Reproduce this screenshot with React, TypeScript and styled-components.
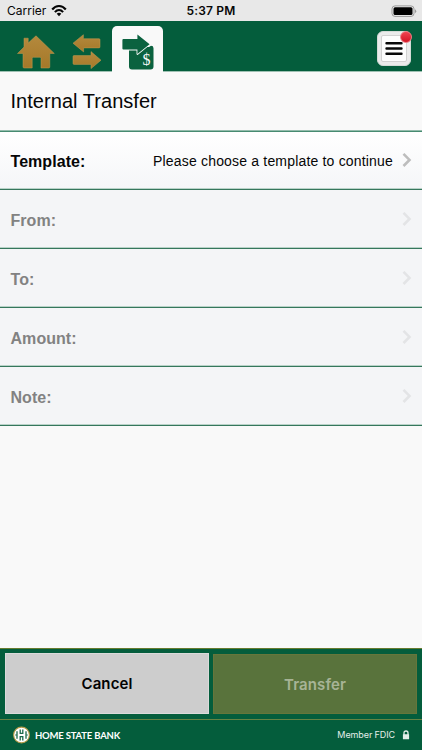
import React from "react";
import styled, { createGlobalStyle } from "styled-components";

const GlobalStyle = createGlobalStyle`
  * { box-sizing: border-box; }
  body { margin: 0; background: #f9f9f9; }
`;

const Screen = styled.div`
  width: 100%;
  height: 100vh;
  min-height: 750px;
  display: flex;
  flex-direction: column;
  overflow: hidden;
  background: #f9f9f9;
  color: #060606;
  font-family: "Liberation Sans", Arial, sans-serif;
`;

const StatusBar = styled.div`
  height: 21px;
  flex: none;
  display: grid;
  grid-template-columns: 1fr auto 1fr;
  align-items: center;
  padding: 0 5px 0 7px;
  background: #e8e8e8;
  font-family: Inter, sans-serif;
  font-size: 12px;
`;

const Carrier = styled.div`
  display: flex;
  align-items: center;
  gap: 5px;
`;

const Clock = styled.div`
  margin-left: -2px;
  font-weight: 600;
  letter-spacing: 0.2px;
`;

const BatterySlot = styled.div`
  display: flex;
  justify-content: flex-end;
`;

const Header = styled.header`
  height: 51px;
  flex: none;
  display: flex;
  background: #045d3c;
  border-bottom: 1px solid #9fc1b3;
`;

const NavButton = styled.button<{ $width: number; $active?: boolean }>`
  width: ${(p) => p.$width}px;
  height: ${(p) => (p.$active ? 46 : 50)}px;
  margin-top: ${(p) => (p.$active ? 5 : 0)}px;
  padding: 0;
  border: 0;
  border-radius: 5px 5px 0 0;
  background: ${(p) => (p.$active ? "#f9f9f9" : "transparent")};
  display: block;
  svg { display: block; }
`;

const MenuButton = styled.button`
  position: relative;
  width: 34px;
  height: 35px;
  margin: 10px 11px 0 auto;
  padding: 3px;
  border: 1px solid #d5dbd7;
  border-radius: 6px;
  background: #ebebeb;
`;

const MenuFace = styled.span`
  width: 26px;
  height: 27px;
  display: flex;
  align-items: center;
  justify-content: center;
  background: #fdfdfd;
  border: 1px solid #d2d2d2;
  border-radius: 2px;
`;

const Badge = styled.span`
  position: absolute;
  top: -1px;
  right: -2px;
  width: 12px;
  height: 12px;
  border-radius: 50%;
  border: 1px solid #eb7d85;
  background: linear-gradient(#ef4450, #d31525);
`;

const Title = styled.h1`
  height: 58px;
  flex: none;
  margin: 0;
  padding: 0 10.5px;
  line-height: 59px;
  font-size: 20px;
  font-weight: 400;
  letter-spacing: 0.04px;
`;

const Rows = styled.div`
  flex: none;
  border-top: 1px solid #94bcac;
  box-shadow: inset 0 1px #478b71;
  padding-top: 1px;
`;

const Row = styled.div<{ $disabled?: boolean }>`
  height: 59px;
  display: flex;
  align-items: center;
  padding: 0 10px 0 10.5px;
  border-bottom: 1px solid #35775c;
  box-shadow: inset 0 -1px #b9d2c8;
  background: ${(p) => (p.$disabled ? "#f4f5f7" : "linear-gradient(#fff, #f5f6f8)")};
  color: ${(p) => (p.$disabled ? "#828282" : "#060606")};
  &:first-child { height: 58px; }
  svg { margin-bottom: 1px; }
`;

const Label = styled.span`
  flex: 1;
  padding-top: 3px;
  font-size: 16px;
  font-weight: 700;
  letter-spacing: 0.05px;
`;

const Value = styled.span`
  padding-top: 1px;
  margin-right: 9px;
  font-size: 14px;
  letter-spacing: 0.18px;
`;

const Spacer = styled.div`
  flex: 1;
`;

const Actions = styled.div`
  height: 72px;
  flex: none;
  display: grid;
  grid-template-columns: 204px 204px;
  column-gap: 4px;
  padding: 4px 5px 5px;
  background: #045d3c;
  border-top: 1px solid #667c2f;
  border-bottom: 1px solid #668343;
`;

const ActionButton = styled.button<{ $primary?: boolean }>`
  margin: ${(p) => (p.$primary ? "1px 0 0 0" : "0")};
  padding: 0;
  border: 1px solid ${(p) => (p.$primary ? "#66763b" : "#dadada")};
  background: ${(p) => (p.$primary ? "#59733c" : "#cdcdcd")};
  color: ${(p) => (p.$primary ? "#a7b496" : "#030303")};
  font-family: Inter, sans-serif;
  font-size: 15px;
  font-weight: 600;
  letter-spacing: 0.1px;
`;

const Footer = styled.footer`
  height: 30px;
  flex: none;
  display: flex;
  align-items: center;
  padding: 0 12px 0 13px;
  background: #045d3c;
  color: #fff;
`;

const BankName = styled.span`
  flex: 1;
  margin-left: 5px;
  font-family: Lato, sans-serif;
  font-size: 9.5px;
  font-weight: 700;
  letter-spacing: -0.2px;
`;

const Member = styled.span`
  margin-right: 7px;
  font-family: Inter, sans-serif;
  font-size: 9px;
  line-height: 10px;
  letter-spacing: -0.1px;
  color: #e3eee9;
`;

const WifiIcon = () => (
  <svg width="16" height="12" viewBox="0 0 16 12" fill="none" stroke="#050505" strokeWidth="2.1">
    <path d="M1.2 4.5C5-.1 11-.1 14.8 4.5" />
    <path d="M3.9 7.1C6.4 4.3 9.6 4.3 12.1 7.1" />
    <path d="M8 11.2 5.7 8.8c1.4-1.3 3.2-1.3 4.6 0Z" fill="#050505" stroke="none" />
  </svg>
);

const BatteryIcon = () => (
  <svg width="26" height="12" viewBox="0 0 26 12">
    <rect x="1" y=".9" width="22" height="10.5" rx="3" fill="#ededed" stroke="#999" />
    <rect x="2.5" y="2.3" width="19" height="7.7" rx="1.5" fill="#000" />
    <path d="M24.2 4.2q2 2 0 4Z" fill="#888" />
  </svg>
);

const MenuIcon = () => (
  <svg width="18" height="15" viewBox="0 0 18 15">
    <path d="M1.5 2.2h15M1.5 7.5h15M1.5 12.8h15" stroke="#080808" strokeWidth="2.4" strokeLinecap="round" />
  </svg>
);

const GoldGradient = ({ id }: { id: string }) => (
  <defs>
    <linearGradient id={id} x1="0" y1="0" x2="0" y2="1">
      <stop offset="0" stopColor="#b4893d" />
      <stop offset="1" stopColor="#a57929" />
    </linearGradient>
  </defs>
);

const HomeIcon = () => (
  <svg width="62" height="50" viewBox="0 21 62 50">
    <GoldGradient id="goldHome" />
    <path
      d="M36 35.8 54.3 53.5h-4.5V67q0 1-1 1H41v-9.7q0-1-1-1h-6.8q-1 0-1 1V68h-8q-1.2 0-1.2-1V53.5H17.5L24 47v-8.8h4.2V43Z"
      fill="url(#goldHome)"
      stroke="#c09a50"
      strokeWidth=".5"
      strokeLinejoin="round"
    />
  </svg>
);

const SwapIcon = () => (
  <svg width="50" height="50" viewBox="62 21 50 50">
    <GoldGradient id="goldSwap" />
    <g fill="url(#goldSwap)" stroke="#c09a50" strokeWidth=".5" strokeLinejoin="round">
      <path d="m73 43.2 10.4-8.5v4H99q1 0 1 1v7.2q0 1-1 1H83.6v4Z" />
      <path d="m101 60.2-10-8.6v4H74q-1 0-1 1v6.8q0 1 1 1h17v4.2Z" />
    </g>
  </svg>
);

const TemplateIcon = () => (
  <svg width="51" height="45" viewBox="112 26 51 45">
    <path d="M129 46h20l2-1.2q2.5 0 2.5 2.4V65.5q0 3-3 3h-18.5q-3 0-3-3Z" fill="#0b623f" />
    <path
      d="M122.4 39q0-1 1-1H137.4v-4.6L149.6 43.2 137.4 53v-4.4H123.4q-1 0-1-1Z"
      fill="#0b623f"
      stroke="#f9f9f9"
      strokeWidth="1.7"
      strokeLinejoin="round"
      paintOrder="stroke"
    />
    <text x="146.4" y="63.6" fill="#f9f9f9" fontFamily="Liberation Serif" fontSize="16" textAnchor="middle">$</text>
  </svg>
);

const Chevron = ({ disabled }: { disabled?: boolean }) => (
  <svg width="10" height="16" viewBox="0 0 10 16" fill="none">
    <path d="m1.5 1.8 6 6.1-6 6.1" stroke={disabled ? "#e3e4e6" : "#bdbdbd"} strokeWidth="2.6" />
  </svg>
);

const BankLogo = () => (
  <svg width="17" height="18" viewBox="0 0 17 18">
    <circle cx="8.5" cy="9" r="7.9" fill="#fff" stroke="#b29a46" strokeWidth="1.1" />
    <path
      d="M7.2 3.4v4h2.6v-4M7.2 14.6v-4h2.6v4M4 5.2v7.6M13 5.2v7.6"
      stroke="#1b6a4a"
      strokeWidth="1.3"
      fill="none"
    />
    <path d="M2.2 9h1.6M13.2 9h1.6" stroke="#1b6a4a" strokeWidth="1.1" />
  </svg>
);

const LockIcon = () => (
  <svg width="8" height="10" viewBox="0 0 8 10">
    <path d="M2 5V3.1Q2 1 4 1t2 2.1V5" fill="none" stroke="#e3eee9" strokeWidth="1.3" />
    <rect x=".9" y="4.2" width="6.2" height="5" rx=".5" fill="#e3eee9" />
  </svg>
);

const fields = [
  { label: "Template:", value: "Please choose a template to continue", disabled: false },
  { label: "From:", disabled: true },
  { label: "To:", disabled: true },
  { label: "Amount:", disabled: true },
  { label: "Note:", disabled: true },
];

export default function App() {
  return (
    <Screen>
      <GlobalStyle />
      <StatusBar>
        <Carrier>Carrier <WifiIcon /></Carrier>
        <Clock>5:37 PM</Clock>
        <BatterySlot><BatteryIcon /></BatterySlot>
      </StatusBar>
      <Header>
        <NavButton $width={62} aria-label="Home"><HomeIcon /></NavButton>
        <NavButton $width={50} aria-label="Transfers"><SwapIcon /></NavButton>
        <NavButton $width={51} $active aria-label="Template transfer"><TemplateIcon /></NavButton>
        <MenuButton aria-label="Menu">
          <MenuFace><MenuIcon /></MenuFace>
          <Badge />
        </MenuButton>
      </Header>
      <Title>Internal Transfer</Title>
      <Rows>
        {fields.map((f) => (
          <Row key={f.label} $disabled={f.disabled}>
            <Label>{f.label}</Label>
            {f.value && <Value>{f.value}</Value>}
            <Chevron disabled={f.disabled} />
          </Row>
        ))}
      </Rows>
      <Spacer />
      <Actions>
        <ActionButton>Cancel</ActionButton>
        <ActionButton $primary disabled>Transfer</ActionButton>
      </Actions>
      <Footer>
        <BankLogo />
        <BankName>HOME STATE BANK</BankName>
        <Member>Member FDIC</Member>
        <LockIcon />
      </Footer>
    </Screen>
  );
}
